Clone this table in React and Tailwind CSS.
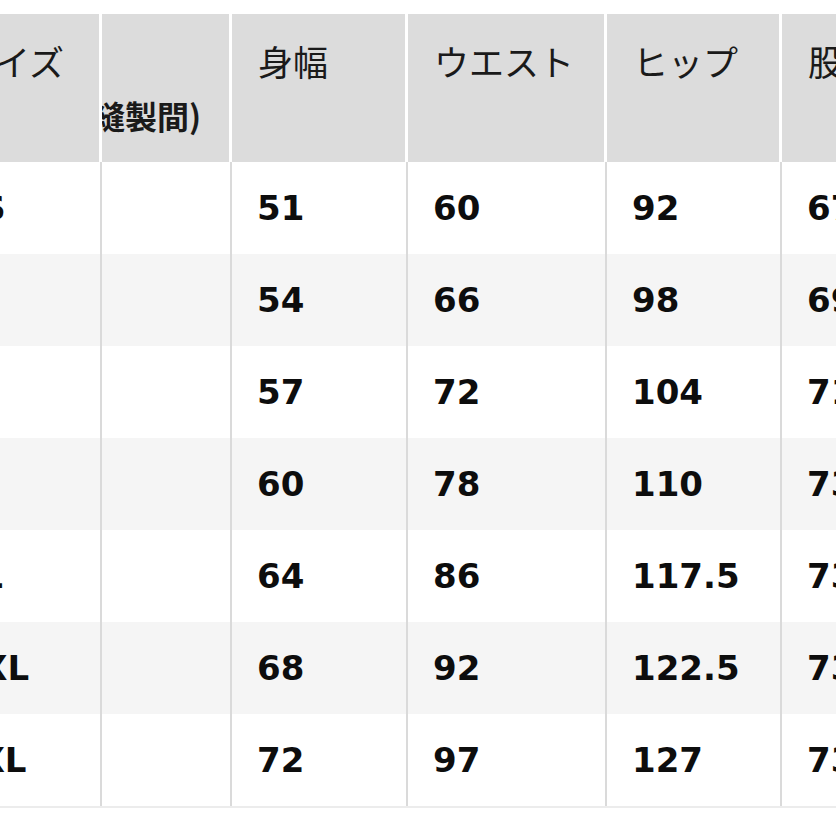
const cols = ["w-[168px]", "w-[130px]", "w-[176px]", "w-[199px]", "w-[175px]", "w-[200px]"];

const headers = ["サイズ", null, "身幅", "ウエスト", "ヒップ", "股下"];

const rows = [
  ["XS", "", "51", "60", "92", "67"],
  ["S", "", "54", "66", "98", "69"],
  ["M", "", "57", "72", "104", "71"],
  ["L", "", "60", "78", "110", "73"],
  ["XL", "", "64", "86", "117.5", "73"],
  ["XXL", "", "68", "92", "122.5", "73"],
  ["3XL", "", "72", "97", "127", "73"],
];

const jp = { fontFamily: '"Noto Sans CJK JP", "Noto Sans", sans-serif' };
const num = { fontFamily: '"DejaVu Sans", "Liberation Sans", sans-serif' };

export default function App() {
  return (
    <div className="w-[836px] h-[836px] bg-white overflow-hidden pt-[14px]">
      <div className="ml-[-66px] flex flex-col w-[1048px]">
        {/* header */}
        <div className="flex h-[148px] bg-[#dcdcdc] text-[35px] text-[#1a1a1a] leading-[55px]" style={jp}>
          {headers.map((h, i) => (
            <div
              key={i}
              className={`${cols[i]} shrink-0 border-r-[3px] border-white pt-[19px] pl-[26px] overflow-hidden`}
            >
              {h === null ? (
                <div className="flex flex-col items-end pr-[28px] font-bold text-[32px]">
                  <span className="whitespace-nowrap">&nbsp;</span>
                  <span className="whitespace-nowrap">(裄丈縫製間)</span>
                </div>
              ) : (
                <span className="whitespace-nowrap">{h}</span>
              )}
            </div>
          ))}
        </div>
        {/* body */}
        <div className="flex flex-col border-b-2 border-[#ececec]">
          {rows.map((r, ri) => (
            <div
              key={ri}
              className={`flex h-[92px] ${ri % 2 === 1 ? "bg-[#f5f5f5]" : "bg-white"}`}
            >
              {r.map((c, ci) => (
                <div
                  key={ci}
                  className={`${cols[ci]} shrink-0 border-r-2 border-[#dadada] flex items-center ${ci === 0 ? "pl-[21px]" : "pl-[25px]"} text-[34px] font-bold text-[#0d0d0d] whitespace-nowrap`}
                  style={num}
                >
                  {c}
                </div>
              ))}
            </div>
          ))}
        </div>
      </div>
    </div>
  );
}
